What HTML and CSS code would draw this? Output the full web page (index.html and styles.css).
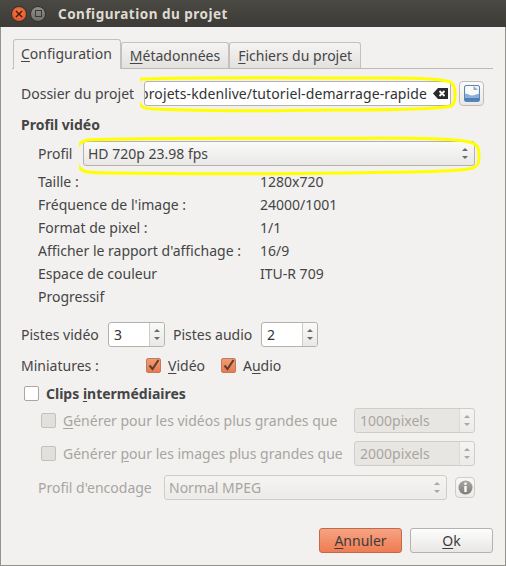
FILE: index.html
```html
<!DOCTYPE html>
<html lang="fr">
<head>
<meta charset="UTF-8">
<title>Configuration du projet</title>
<link rel="stylesheet" href="styles.css">
</head>
<body>
<div class="window">
  <div class="titlebar">
    <span class="wbtn close"><svg width="8" height="8" viewBox="0 0 8 8"><path d="M1 1l6 6M7 1L1 7" stroke="#4a1a08" stroke-width="1.5"/></svg></span>
    <span class="wbtn max"><i></i></span>
    <span class="title">Configuration du projet</span>
  </div>

  <div class="content">
    <div class="tabs">
      <div class="tab active"><u>C</u>onfiguration</div>
      <div class="tab"><u>M</u>étadonnées</div>
      <div class="tab"><u>F</u>ichiers du projet</div>
    </div>

    <div class="pane">
      <div class="row folder-row">
        <span class="folder-label">Dossier du projet</span>
        <div class="entry marked">
          <span class="entry-text">projets-kdenlive/tutoriel-demarrage-rapide</span>
          <svg class="clear-icon" width="15" height="11" viewBox="0 0 15 11"><path d="M0 5.500L5 0h10v11H5z" fill="#2b2b2b"/><path d="M6.500 3l5 5M11.500 3l-5 5" stroke="#fff" stroke-width="1.8"/></svg>
          <svg class="scribble" width="320" height="38" viewBox="0 0 320 38"><path d="M6 3C60 1 170 2 250 2c30 0 52 1 60 4 4 2 5 6 5 11 0 6 0 11-4 13-12 3-60 4-120 4-60 1-130 1-175-1-6 0-12 0-15-3-3-4-4-10-3-17 0-5 1-9 3-10z" fill="none" stroke="#ffff00" stroke-width="3"/></svg>
        </div>
        <button class="icon-btn doc-btn"><svg width="16" height="17" viewBox="0 0 16 17"><rect x=".5" y=".5" width="15" height="16" rx="1.500" fill="#eef1f5" stroke="#5c86b8"/><path d="M2 1h7.500l4.500 4v5H2z" fill="#fbfbfa"/><path d="M9.500 1v4H14z" fill="#8fa9c8"/><path d="M1 9c3-1 4 1.500 7 1.500s4-2 7-1.500v7H1z" fill="#8db0d8"/><path d="M1 13h14v3H1z" fill="#4f80ba"/></svg></button>
      </div>

      <h3 class="group-title">Profil vidéo</h3>
      <div class="row profile-row">
        <span class="profile-label">Profil</span>
        <div class="combo marked">
          <span>HD 720p 23.98 fps</span>
          <span class="arrows"></span>
          <svg class="scribble" width="402" height="40" viewBox="0 0 402 40"><path d="M8 4C70 1 200 3 300 2c40 0 78 1 90 4 8 2 10 5 10 13 0 8-1 11-6 13-14 4-70 4-130 5-80 1-170 1-230 0-10 0-24 0-29-2-7-3-8-10-8-17 0-6 3-12 11-14z" fill="none" stroke="#ffff00" stroke-width="3"/></svg>
        </div>
      </div>

      <div class="props">
        <span>Taille :</span><span>1280x720</span>
        <span>Fréquence de l'image :</span><span>24000/1001</span>
        <span>Format de pixel :</span><span>1/1</span>
        <span>Afficher le rapport d'affichage :</span><span>16/9</span>
        <span>Espace de couleur</span><span>ITU-R 709</span>
        <span>Progressif</span><span></span>
      </div>

      <div class="row tracks-row">
        <span class="tracks-label">Pistes vidéo</span>
        <div class="spin"><span class="spin-val">3</span><span class="spin-btn"><span class="arrows"></span></span></div>
        <span class="tracks-label audio-label">Pistes audio</span>
        <div class="spin"><span class="spin-val">2</span><span class="spin-btn"><span class="arrows"></span></span></div>
      </div>

      <div class="row thumbs-row">
        <span class="thumbs-label">Miniatures :</span>
        <span class="check on"><svg width="13" height="13" viewBox="0 0 13 13"><path d="M2.500 6.500l3 3.500 6-9" fill="none" stroke="#5a4032" stroke-width="2"/></svg></span>
        <span class="check-text"><u>V</u>idéo</span>
        <span class="check on"><svg width="13" height="13" viewBox="0 0 13 13"><path d="M2.500 6.500l3 3.500 6-9" fill="none" stroke="#5a4032" stroke-width="2"/></svg></span>
        <span class="check-text">A<u>u</u>dio</span>
      </div>

      <div class="row clips-row">
        <span class="check"></span>
        <span class="clips-title">Clips <u>i</u>ntermédiaires</span>
      </div>

      <div class="row gen-row disabled">
        <span class="check off"></span>
        <span class="gen-text"><u>G</u>énérer pour les vidéos plus grandes que</span>
        <div class="spin wide"><span class="spin-val">1000pixels</span><span class="spin-btn"><span class="arrows"></span></span></div>
      </div>
      <div class="row gen-row disabled">
        <span class="check off"></span>
        <span class="gen-text">Générer <u>p</u>our les images plus grandes que</span>
        <div class="spin wide"><span class="spin-val">2000pixels</span><span class="spin-btn"><span class="arrows"></span></span></div>
      </div>
      <div class="row encode-row disabled">
        <span class="encode-label">Profil d'encodage</span>
        <div class="combo encode-combo"><span>Normal MPEG</span><span class="arrows"></span></div>
        <button class="icon-btn info-btn"><svg width="15" height="15" viewBox="0 0 15 15"><defs><linearGradient id="infoFill" x1="0" y1="0" x2="0" y2="1"><stop offset="0" stop-color="#a8a8a5"/><stop offset="1" stop-color="#7c7c79"/></linearGradient></defs><circle cx="7.500" cy="7.500" r="7" fill="url(#infoFill)"/><rect x="6.300" y="2.600" width="2.400" height="2.200" fill="#fff"/><rect x="6.300" y="6" width="2.400" height="6" fill="#fff"/></svg></button>
      </div>
    </div>

    <div class="actions">
      <button class="btn primary"><u>A</u>nnuler</button>
      <button class="btn"><u>O</u>k</button>
    </div>
  </div>
</div>
</body>
</html>
```
FILE: styles.css
```css
html, body {
  margin: 0;
  padding: 0;
}

body {
  width: 506px;
  height: 566px;
  overflow: hidden;
  font-family: "Noto Sans", "Open Sans", sans-serif;
  font-size: 14px;
  color: #454545;
  background: #f2f1f0;
}

u {
  text-underline-offset: 2px;
}

.window {
  width: 506px;
  height: 566px;
  box-sizing: border-box;
  display: flex;
  flex-direction: column;
}

.titlebar {
  height: 27px;
  flex: none;
  display: flex;
  align-items: center;
  padding-left: 11px;
  background: linear-gradient(#4b4943, #3c3b37);
}

.wbtn {
  width: 16px;
  height: 16px;
  border-radius: 50%;
  display: flex;
  align-items: center;
  justify-content: center;
  box-sizing: border-box;
  border: 1px solid #33322e;
}

.close {
  background: radial-gradient(circle at 50% 40%, #f4794a, #dd4c1e);
}

.max {
  margin-left: 3px;
  background: linear-gradient(#8f8e89, #71706b);
}

.max i {
  width: 5px;
  height: 5px;
  border: 1px solid #3a3934;
}

.title {
  margin-left: 12px;
  font-weight: 700;
  font-size: 13.5px;
  letter-spacing: 0.5px;
  color: #dfdbd2;
}

.content {
  flex: 1;
  padding: 12px 12px 12px 11px;
  border: solid #94928d;
  border-width: 0 1px 1px 1px;
  display: flex;
  flex-direction: column;
}

.tabs {
  display: flex;
  height: 29px;
  padding-left: 1px;
  border-bottom: 1px solid #bdbab5;
  align-items: flex-end;
}

.tab {
  height: 26px;
  line-height: 25px;
  padding: 0 8px;
  box-sizing: border-box;
  border: 1px solid #c4c1bc;
  border-bottom: 0;
  border-radius: 3px 3px 0 0;
  background: linear-gradient(#f5f4f3, #e3e1de);
}

.tab.active {
  height: 30px;
  line-height: 28px;
  margin-bottom: -1px;
  padding: 0 8px 0 7px;
  background: #f2f1f0;
}

.pane {
  flex: 1;
}

.row {
  display: flex;
  align-items: center;
}

.folder-row {
  margin-top: 12px;
  height: 25px;
  padding-left: 9px;
}

.folder-label {
  width: 123px;
  flex: none;
  white-space: nowrap;
}

.entry {
  width: 307px;
  height: 25px;
  box-sizing: border-box;
  border: 1px solid #b5b2ad;
  border-radius: 3px;
  background: #fff;
  display: flex;
  align-items: center;
  color: #333;
}

.entry-text {
  flex: 1;
  white-space: nowrap;
  overflow: hidden;
  direction: rtl;
  padding-right: 6px;
  letter-spacing: 0.1px;
}

.clear-icon {
  flex: none;
  margin-right: 2px;
}

.marked {
  position: relative;
}

.scribble {
  position: absolute;
  left: -5px;
  top: -6px;
  pointer-events: none;
}

.icon-btn {
  padding: 0;
  display: flex;
  align-items: center;
  justify-content: center;
  box-sizing: border-box;
  border: 1px solid #c0bdb8;
  border-radius: 4px;
  background: linear-gradient(#fbfbfa, #e9e8e6);
}

.doc-btn {
  width: 25px;
  height: 25px;
  margin-left: 8px;
}

.group-title {
  margin: 9px 0 0 9px;
  height: 20px;
  line-height: 20px;
  font-size: 14px;
  font-weight: 700;
}

.profile-row {
  margin-top: 6px;
  height: 25px;
  padding-left: 26px;
}

.profile-label {
  width: 45px;
  flex: none;
}

.combo {
  height: 25px;
  width: 392px;
  box-sizing: border-box;
  border: 1px solid #b5b2ad;
  border-radius: 3px;
  background: linear-gradient(#fafafa, #e9e8e6);
  display: flex;
  align-items: center;
  justify-content: space-between;
  padding: 0 6px 0 4px;
}

.arrows {
  width: 6px;
  height: 11px;
  flex: none;
  display: flex;
  flex-direction: column;
  justify-content: space-between;
}

.arrows::before,
.arrows::after {
  content: "";
  display: block;
  border-left: 3px solid transparent;
  border-right: 3px solid transparent;
}

.arrows::before {
  border-bottom: 3px solid #6b6b6b;
}

.arrows::after {
  border-top: 3px solid #6b6b6b;
}

.props {
  margin-top: 4px;
  padding-left: 26px;
  display: grid;
  grid-template-columns: 222px 1fr;
  grid-auto-rows: 23px;
  line-height: 23px;
}

.tracks-row {
  margin-top: 14px;
  height: 25px;
  padding-left: 9px;
}

.tracks-label {
  width: 87px;
  flex: none;
  white-space: nowrap;
}

.audio-label {
  width: 88px;
  margin-left: 8px;
}

.spin {
  width: 57px;
  height: 25px;
  box-sizing: border-box;
  border: 1px solid #b5b2ad;
  border-radius: 3px;
  background: #fff;
  display: flex;
  flex: none;
}

.spin-val {
  flex: 1;
  padding-left: 5px;
  line-height: 23px;
  color: #333;
}

.spin-btn {
  width: 14px;
  flex: none;
  border-left: 1px solid #cfccc8;
  background: linear-gradient(#fafafa, #e9e8e6);
  border-radius: 0 3px 3px 0;
  display: flex;
  align-items: center;
  justify-content: center;
}

.thumbs-row {
  margin-top: 7px;
  height: 22px;
  padding-left: 9px;
}

.thumbs-label {
  width: 125px;
  flex: none;
}

.check {
  width: 15px;
  height: 15px;
  flex: none;
  box-sizing: border-box;
  border: 1px solid #aaa7a2;
  border-radius: 2px;
  background: #fff;
  display: flex;
  align-items: center;
  justify-content: center;
}

.check.on {
  background: linear-gradient(#f29a74, #ea7a4e);
  border-color: #c07a5c;
}

.check-text {
  margin-left: 7px;
  width: 53px;
}

.check-text:last-child {
  width: auto;
}

.clips-row {
  margin-top: 6px;
  height: 22px;
  padding-left: 12px;
}

.clips-title {
  margin-left: 7px;
  font-weight: 700;
}

.gen-row {
  height: 25px;
  margin-top: 8px;
  padding-left: 29px;
}

.clips-row + .gen-row {
  margin-top: 4px;
}

.disabled {
  color: #a8a5a0;
}

.check.off {
  background: #e2e0dd;
  border-color: #c4c1bc;
}

.gen-text {
  margin-left: 7px;
  width: 291px;
  flex: none;
  white-space: nowrap;
}

.spin.wide {
  width: 121px;
  background: #e8e6e3;
  border-color: #d0cdc8;
}

.spin.wide .spin-val {
  color: #a8a5a0;
}

.spin.wide .spin-btn {
  background: linear-gradient(#f5f4f3, #ecebe9);
  border-left-color: #dcd9d5;
}

.spin.wide .arrows::before {
  border-bottom-color: #aaa8a4;
}

.spin.wide .arrows::after {
  border-top-color: #aaa8a4;
}

.encode-row {
  margin-top: 9px;
  height: 25px;
  padding-left: 26px;
}

.encode-label {
  width: 126px;
  flex: none;
  white-space: nowrap;
}

.encode-combo {
  width: 283px;
  background: linear-gradient(#f5f4f3, #ecebe9);
  border-color: #d0cdc8;
}

.encode-combo .arrows::before {
  border-bottom-color: #aaa8a4;
}

.encode-combo .arrows::after {
  border-top-color: #aaa8a4;
}

.info-btn {
  width: 20px;
  height: 21px;
  margin-left: 8px;
  border-color: #d0cdc8;
  background: linear-gradient(#f7f7f6, #ecebe9);
}

.actions {
  display: flex;
  justify-content: flex-end;
  gap: 8px;
}

.btn {
  width: 83px;
  height: 25px;
  padding: 0;
  box-sizing: border-box;
  font: inherit;
  color: #3c3c3c;
  border: 1px solid #b5b2ad;
  border-radius: 3px;
  background: linear-gradient(#fdfdfd, #e8e7e5);
}

.btn.primary {
  border-color: #c06a47;
  background: linear-gradient(#f6a384, #ef7c52);
}
```
